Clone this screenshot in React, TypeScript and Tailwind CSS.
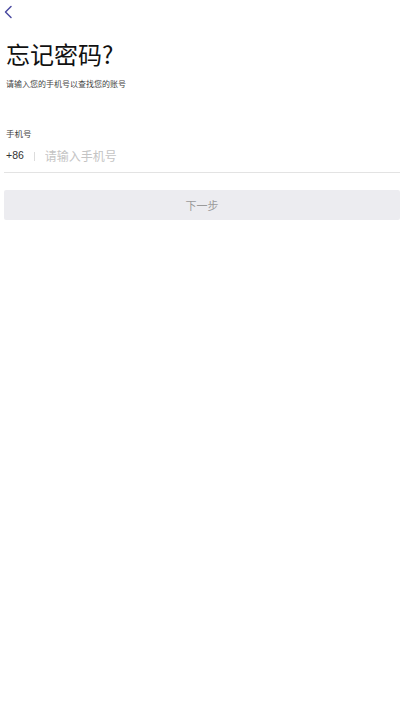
import React, { useState } from 'react';

export default function App() {
  const [phone, setPhone] = useState('');

  return (
    <div
      className="min-h-[711px] w-[400px] bg-white text-[#222]"
      style={{ fontFamily: '"Noto Sans CJK SC", "Noto Sans", sans-serif' }}
    >
      {/* back */}
      <div className="h-[24px] pl-[3px] pt-[5px]">
        <svg width="10" height="14" viewBox="0 0 10 14" fill="none">
          <path d="M8 1.5 L2.5 7 L8 12.5" stroke="#4a4aa0" strokeWidth="1.5" strokeLinecap="round" strokeLinejoin="round" />
        </svg>
      </div>

      <div className="px-[6px]">
        <h1 className="mt-[15px] text-[24px] leading-[30px] font-normal text-[#111]">忘记密码?</h1>
        <p className="mt-[9px] text-[8px] leading-[12px] text-[#444]">请输入您的手机号以查找您的账号</p>

        <div className="mt-[37px] text-[8.5px] leading-[12px] text-[#444]">手机号</div>
      </div>

      <div className="ml-[4px] mt-[1px] flex h-[33px] items-center border-b border-[#e3e3e3] pl-[2px]">
        <span className="text-[10.5px] text-[#333]" style={{ fontFamily: '"Liberation Sans", "Noto Sans CJK SC", sans-serif' }}>+86</span>
        <span className="ml-[10px] mr-[10px] h-[9px] w-px bg-[#dcdcdc]" />
        <input
          value={phone}
          onChange={(e) => setPhone(e.target.value)}
          placeholder="请输入手机号"
          className="flex-1 bg-transparent text-[12px] text-[#333] outline-none placeholder:text-[#c4c4c4]"
        />
      </div>

      <button className="ml-[4px] mt-[17px] flex h-[30px] w-[396px] items-center justify-center rounded-[2px] bg-[#ececf0] text-[11px] text-[#9a9a9a]">
        下一步
      </button>
    </div>
  );
}
